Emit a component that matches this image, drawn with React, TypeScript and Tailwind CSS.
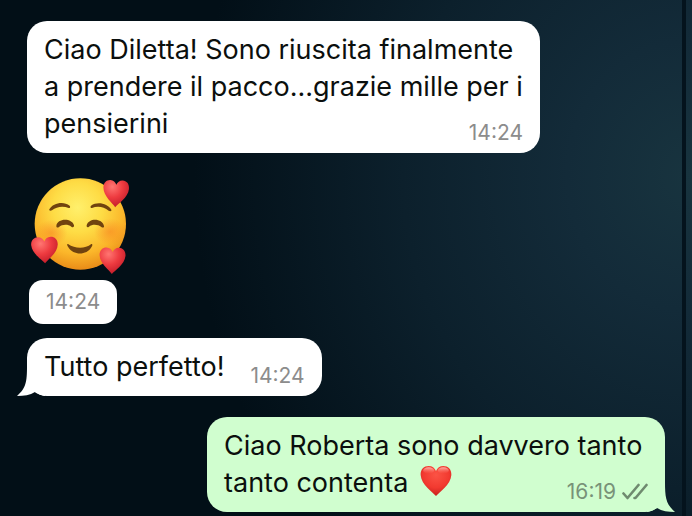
import type { ReactNode } from "react";

const HEART =
  "M50 97 C40 84 4 62 2 31 C1 13 13 3 27 3 C38 3 46 9 50 19 C54 9 62 3 73 3 C87 3 99 13 98 31 C96 62 60 84 50 97 Z";

function HeartShape({ transform, fill }: { transform?: string; fill: string }) {
  return <path d={HEART} transform={transform} fill={`url(#${fill})`} />;
}

function LoveFace() {
  return (
    <svg viewBox="30 30 300 300" className="h-[100px] w-[100px]" role="img" aria-label="Faccina con cuori">
      <defs>
        <radialGradient id="face" cx="0.47" cy="0.32" r="0.68">
          <stop offset="0" stopColor="#fff06c" />
          <stop offset="0.4" stopColor="#fedc45" />
          <stop offset="0.75" stopColor="#fbb62a" />
          <stop offset="1" stopColor="#e98c18" />
        </radialGradient>
        <radialGradient id="blush">
          <stop offset="0" stopColor="#f8791f" stopOpacity="0.5" />
          <stop offset="1" stopColor="#f8791f" stopOpacity="0" />
        </radialGradient>
        <radialGradient id="pinkHeart" cx="0.35" cy="0.25" r="0.8">
          <stop offset="0" stopColor="#ff7672" />
          <stop offset="0.5" stopColor="#ee3b40" />
          <stop offset="1" stopColor="#c01a28" />
        </radialGradient>
      </defs>
      <circle cx="181" cy="177" r="137" fill="url(#face)" />
      <ellipse cx="94" cy="204" rx="48" ry="40" fill="url(#blush)" />
      <ellipse cx="270" cy="200" rx="48" ry="40" fill="url(#blush)" />
      <g fill="#70430f">
        <path d="M88 133 C98 115 130 107 149 122 C152 125 150 130 146 129 C130 122 110 124 96 136 C91 139 86 137 88 133 Z" />
        <path d="M274 134 C263 115 232 108 213 122 C210 125 212 130 216 129 C232 122 252 125 266 137 C271 140 276 138 274 134 Z" />
        <path d="M109 183 C111 159 156 158 162 181 C163 187 158 188 154 185 C144 177 126 178 117 186 C113 189 109 188 109 183 Z" />
        <path d="M200 181 C206 158 247 159 252 183 C253 188 248 189 244 186 C234 178 217 177 207 185 C203 188 199 187 200 181 Z" />
        <path d="M144 237 C166 252 195 252 214 237 C219 237 217 243 214 247 C200 272 160 272 145 247 C141 241 140 236 144 237 Z" />
      </g>
      <HeartShape fill="pinkHeart" transform="translate(250 41) rotate(3) scale(0.8 0.86)" />
      <HeartShape fill="pinkHeart" transform="translate(31 215) rotate(-2) scale(0.83 0.84)" />
      <HeartShape fill="pinkHeart" transform="translate(238 244) rotate(2) scale(0.81 0.84)" />
    </svg>
  );
}

function RedHeart() {
  return (
    <svg viewBox="0 0 100 100" className="ml-1 inline-block h-8 w-8 align-[-5px]" role="img" aria-label="Cuore rosso">
      <defs>
        <radialGradient id="redHeart" cx="0.5" cy="0.3" r="0.7">
          <stop offset="0" stopColor="#fb5345" />
          <stop offset="0.6" stopColor="#f23a30" />
          <stop offset="1" stopColor="#c71f1d" />
        </radialGradient>
        <linearGradient id="gloss" x1="0" y1="0" x2="0" y2="1">
          <stop offset="0" stopColor="#ffd0c8" stopOpacity="0.8" />
          <stop offset="1" stopColor="#ff7a6c" stopOpacity="0" />
        </linearGradient>
      </defs>
      <HeartShape fill="redHeart" />
      <ellipse cx="27" cy="17" rx="17" ry="10" fill="url(#gloss)" />
      <ellipse cx="73" cy="17" rx="17" ry="10" fill="url(#gloss)" />
    </svg>
  );
}

function Ticks() {
  return (
    <svg
      viewBox="0 0 26 18"
      className="h-[18px] w-[26px]"
      fill="none"
      stroke="#6f8a6f"
      strokeWidth="2.6"
      strokeLinecap="round"
      strokeLinejoin="round"
      role="img"
      aria-label="Consegnato"
    >
      <path d="M1.5 10.5 L5.5 15 L16.5 2" />
      <path d="M12.5 15 L13.5 15 L24.5 2" />
    </svg>
  );
}

function Tail({ side }: { side: "left" | "right" }) {
  return (
    <svg
      viewBox="0 0 28 30"
      className={
        side === "left"
          ? "absolute bottom-0 -left-2.5 h-[30px] w-7 fill-white"
          : "absolute -right-2.5 bottom-0 h-[30px] w-7 -scale-x-100 fill-[#d0fecf]"
      }
      aria-hidden="true"
    >
      <path d="M10 0 C10 16 9 22 0 30 C7 30 13 29 18 26 C21 28 24 29 28 30 L28 0 Z" />
    </svg>
  );
}

function Bubble({ out, tail, children }: { out?: boolean; tail?: boolean; children: ReactNode }) {
  return (
    <article
      className={
        "relative rounded-[20px] px-[17px] pt-2.5 pb-[11px] text-[27px] leading-[37px] text-[#0b0f0d] " +
        (out ? "max-w-[458px] self-end bg-[#d0fecf]" : "max-w-[513px] self-start bg-white")
      }
    >
      {tail && <Tail side={out ? "right" : "left"} />}
      <div className="relative flow-root">{children}</div>
    </article>
  );
}

function Time({ value, ticks }: { value: string; ticks?: boolean }) {
  return (
    <span
      className={
        "float-right mt-[19px] ml-[26px] flex items-center gap-1.5 text-[21px] leading-[18px] " +
        (ticks ? "text-[#789278]" : "text-[#8c8c8c]")
      }
    >
      <time dateTime={value}>{value}</time>
      {ticks && <Ticks />}
    </span>
  );
}

export default function App() {
  return (
    <main className="relative flex min-h-screen flex-col bg-[#020f17] bg-[radial-gradient(ellipse_72%_105%_at_100%_34%,#18343f_0%,#132b39_25%,#0c202c_58%,#020f17_100%)] px-[27px] pt-[21px] pb-1 font-['Inter','Liberation_Sans',sans-serif]">
      <div className="absolute inset-y-0 right-1.5 w-1 bg-[#04131d]" />
      <Bubble>
        Ciao Diletta! Sono riuscita finalmente a prendere il pacco...grazie mille per i pensierini
        <Time value="14:24" />
      </Bubble>
      <div className="mt-[22px] flex flex-col items-start gap-[5px]">
        <div className="pl-[3px]">
          <LoveFace />
        </div>
        <time
          dateTime="14:24"
          className="ml-0.5 rounded-[14px] bg-white px-[17px] py-2.5 text-[21px] leading-6 text-[#8c8c8c]"
        >
          14:24
        </time>
      </div>
      <div className="mt-3.5 flex flex-col gap-[21px]">
        <Bubble tail>
          Tutto perfetto!
          <Time value="14:24" />
        </Bubble>
        <Bubble out tail>
          Ciao Roberta sono davvero tanto tanto contenta <RedHeart />
          <Time value="16:19" ticks />
        </Bubble>
      </div>
    </main>
  );
}
